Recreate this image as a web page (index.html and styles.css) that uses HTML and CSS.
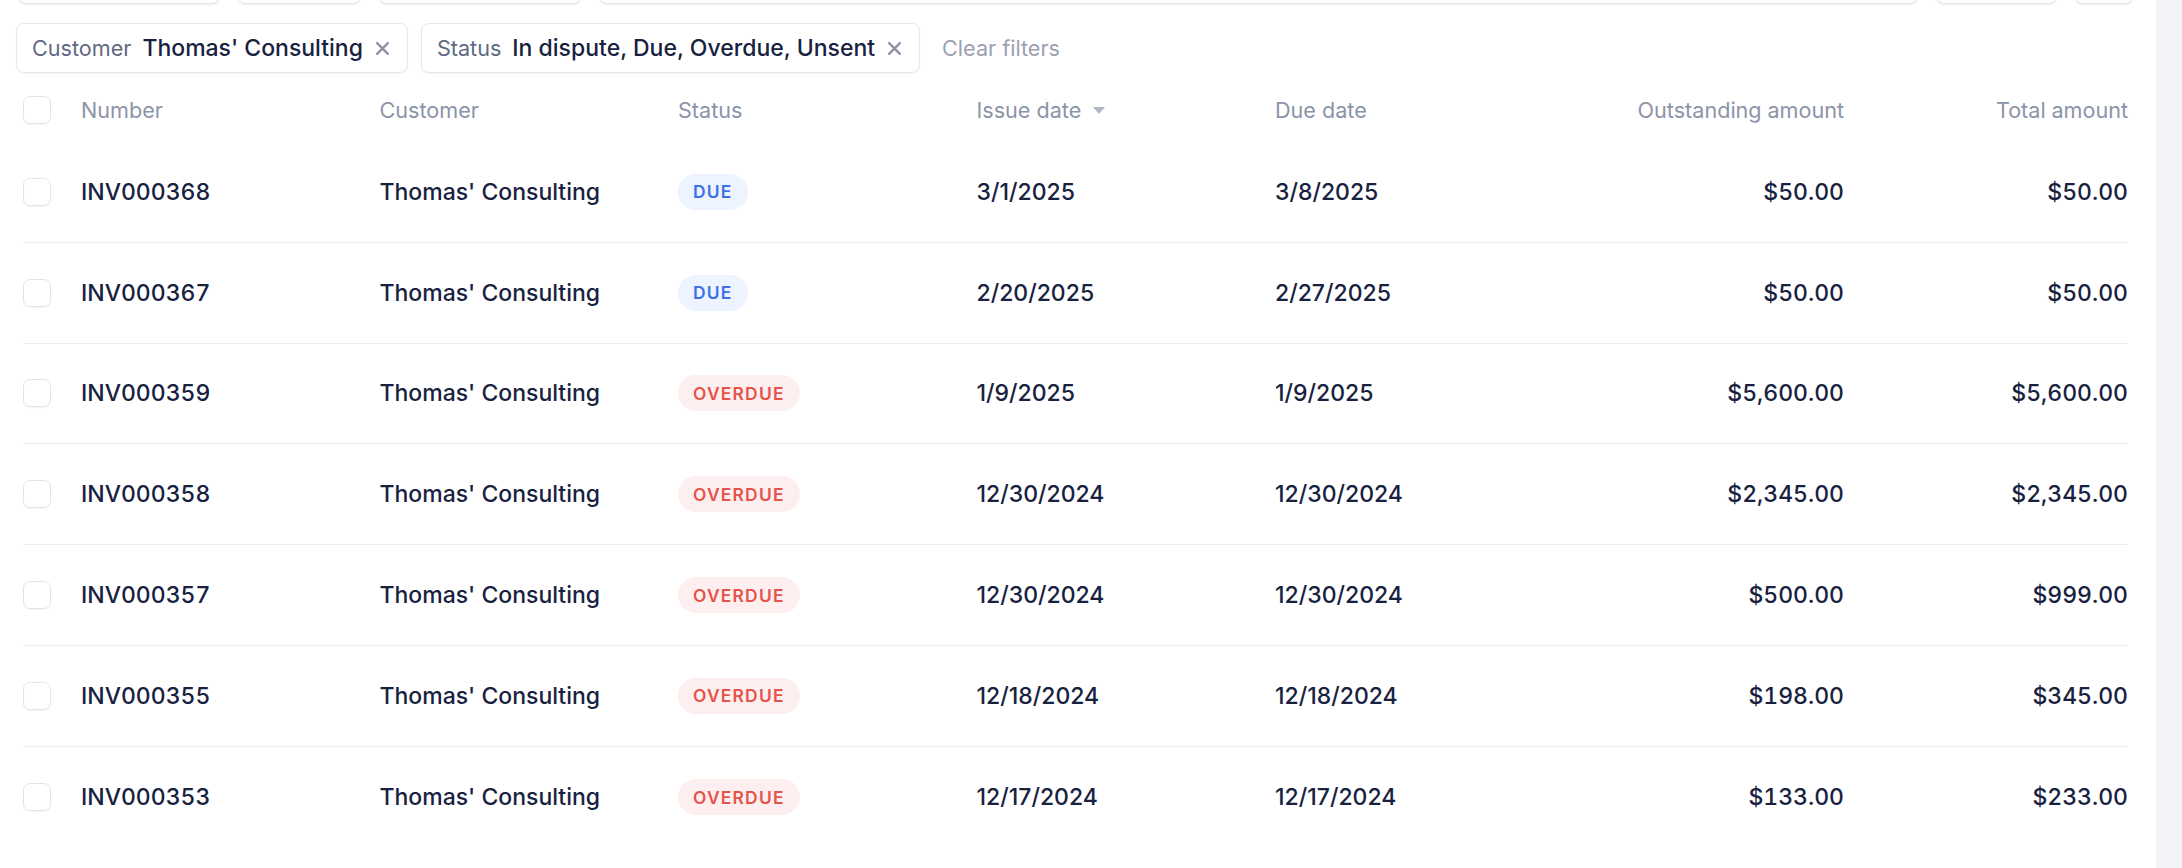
FILE: index.html
```html
<!DOCTYPE html>
<html lang="en">
<head>
  <meta charset="UTF-8">
  <title>Invoices</title>
  <link rel="stylesheet" href="styles.css">
</head>
<body>
  <div class="page">
    <main class="main">
      <!-- toolbar scrolled out of view, only bottom edges left -->
      <div class="toolbar">
        <span class="tool-btn w-search"></span>
        <span class="tool-btn w-small"></span>
        <span class="tool-btn w-mid"></span>
        <span class="tool-btn w-grow"></span>
        <span class="tool-btn w-action"></span>
        <span class="tool-btn w-icon"></span>
      </div>

      <div class="filters">
        <div class="chip">
          <span class="chip-label">Customer</span>
          <span class="chip-value">Thomas' Consulting</span>
          <svg class="chip-x" viewBox="0 0 16 16" width="17" height="17"><path d="M3 3l10 10M13 3L3 13" stroke="currentColor" stroke-width="2.2" stroke-linecap="round"/></svg>
        </div>
        <div class="chip">
          <span class="chip-label">Status</span>
          <span class="chip-value">In dispute, Due, Overdue, Unsent</span>
          <svg class="chip-x" viewBox="0 0 16 16" width="17" height="17"><path d="M3 3l10 10M13 3L3 13" stroke="currentColor" stroke-width="2.2" stroke-linecap="round"/></svg>
        </div>
        <span class="clear-filters">Clear filters</span>
      </div>

      <div class="table">
        <div class="row head">
          <div class="cell"><span class="checkbox"></span></div>
          <div class="cell">Number</div>
          <div class="cell">Customer</div>
          <div class="cell">Status</div>
          <div class="cell">Issue date <span class="sort-arrow"></span></div>
          <div class="cell">Due date</div>
          <div class="cell num">Outstanding amount</div>
          <div class="cell num">Total amount</div>
        </div>

        <div class="row">
          <div class="cell"><span class="checkbox"></span></div>
          <div class="cell code">INV000368</div>
          <div class="cell">Thomas' Consulting</div>
          <div class="cell"><span class="badge due">Due</span></div>
          <div class="cell">3/1/2025</div>
          <div class="cell">3/8/2025</div>
          <div class="cell num">$50.00</div>
          <div class="cell num">$50.00</div>
        </div>
        <div class="row">
          <div class="cell"><span class="checkbox"></span></div>
          <div class="cell code">INV000367</div>
          <div class="cell">Thomas' Consulting</div>
          <div class="cell"><span class="badge due">Due</span></div>
          <div class="cell">2/20/2025</div>
          <div class="cell">2/27/2025</div>
          <div class="cell num">$50.00</div>
          <div class="cell num">$50.00</div>
        </div>
        <div class="row">
          <div class="cell"><span class="checkbox"></span></div>
          <div class="cell code">INV000359</div>
          <div class="cell">Thomas' Consulting</div>
          <div class="cell"><span class="badge overdue">Overdue</span></div>
          <div class="cell">1/9/2025</div>
          <div class="cell">1/9/2025</div>
          <div class="cell num">$5,600.00</div>
          <div class="cell num">$5,600.00</div>
        </div>
        <div class="row">
          <div class="cell"><span class="checkbox"></span></div>
          <div class="cell code">INV000358</div>
          <div class="cell">Thomas' Consulting</div>
          <div class="cell"><span class="badge overdue">Overdue</span></div>
          <div class="cell">12/30/2024</div>
          <div class="cell">12/30/2024</div>
          <div class="cell num">$2,345.00</div>
          <div class="cell num">$2,345.00</div>
        </div>
        <div class="row">
          <div class="cell"><span class="checkbox"></span></div>
          <div class="cell code">INV000357</div>
          <div class="cell">Thomas' Consulting</div>
          <div class="cell"><span class="badge overdue">Overdue</span></div>
          <div class="cell">12/30/2024</div>
          <div class="cell">12/30/2024</div>
          <div class="cell num">$500.00</div>
          <div class="cell num">$999.00</div>
        </div>
        <div class="row">
          <div class="cell"><span class="checkbox"></span></div>
          <div class="cell code">INV000355</div>
          <div class="cell">Thomas' Consulting</div>
          <div class="cell"><span class="badge overdue">Overdue</span></div>
          <div class="cell">12/18/2024</div>
          <div class="cell">12/18/2024</div>
          <div class="cell num">$198.00</div>
          <div class="cell num">$345.00</div>
        </div>
        <div class="row">
          <div class="cell"><span class="checkbox"></span></div>
          <div class="cell code">INV000353</div>
          <div class="cell">Thomas' Consulting</div>
          <div class="cell"><span class="badge overdue">Overdue</span></div>
          <div class="cell">12/17/2024</div>
          <div class="cell">12/17/2024</div>
          <div class="cell num">$133.00</div>
          <div class="cell num">$233.00</div>
        </div>
      </div>
    </main>
    <aside class="rail"></aside>
  </div>
</body>
</html>
```

FILE: styles.css
```css
/* Base */
body {
  margin: 0;
  font-family: Inter, "Noto Sans", Arial, sans-serif;
  font-size: 23px;
  color: #18223f;
  background: #ffffff;
  overflow: hidden;
}
.page {
  display: flex;
  height: 868px;
}
.main {
  flex: 1;
  min-width: 0;
}
.rail {
  width: 26px;
  background: #f2f3f7;
}

/* Toolbar (scrolled off the top) */
.toolbar {
  display: flex;
  gap: 18px;
  padding: 0 23px 0 18px;
  margin-top: -40px;
}
.tool-btn {
  display: block;
  height: 42px;
  border: 1px solid #e4e6eb;
  border-radius: 8px;
  box-shadow: 0 1px 2px rgba(20, 30, 60, 0.08);
  background: #fff;
}
.w-search { width: 200px; }
.w-small { width: 121px; }
.w-mid { width: 200px; }
.w-grow { flex: 1; }
.w-action { width: 119px; }
.w-icon { width: 56px; }

/* Filter chips */
.filters {
  display: flex;
  align-items: center;
  gap: 13px;
  padding: 19px 16px 0;
}
.chip {
  display: flex;
  align-items: center;
  height: 50px;
  box-sizing: border-box;
  padding: 0 16px 0 15px;
  border: 1.4px solid #e5e7ec;
  border-radius: 8px;
  box-shadow: 0 1px 2px rgba(20, 30, 60, 0.04);
}
.chip-label {
  color: #5f6982;
  font-size: 21.6px;
  margin-right: 11px;
}
.chip-value {
  color: #18223f;
  font-weight: 500;
}
.chip-x {
  color: #8a91a3;
  margin-left: 11px;
}
.clear-filters {
  color: #9aa1b2;
  font-size: 21.6px;
  margin-left: 9px;
}

/* Table */
.table {
  margin: 5px 28px 0 23px;
}
.row {
  display: grid;
  grid-template-columns: 58px repeat(5, 298.5px) 1fr 284px;
  align-items: center;
  height: 100.8px;
  box-sizing: border-box;
  border-bottom: 1px solid #eceef2;
  font-weight: 500;
}
.row:last-child {
  border-bottom: none;
}
.row.head {
  height: 64px;
  border-bottom: none;
  color: #8c94a8;
  font-size: 21.6px;
  font-weight: 400;
}
.cell {
  display: flex;
  align-items: center;
  white-space: nowrap;
}
.cell.code,
.cell.num {
  font-variant-numeric: tabular-nums;
}
.cell.num {
  justify-content: flex-end;
}
.checkbox {
  display: block;
  width: 28px;
  height: 28px;
  box-sizing: border-box;
  border: 1.4px solid #e2e4ea;
  border-radius: 7px;
  box-shadow: 0 1px 1px rgba(20, 30, 60, 0.04);
}
.sort-arrow {
  display: inline-block;
  margin-left: 12px;
  width: 0;
  height: 0;
  border-left: 6px solid transparent;
  border-right: 6px solid transparent;
  border-top: 7px solid #b0b6c3;
}

/* Status badges */
.badge {
  display: inline-flex;
  align-items: center;
  height: 36px;
  padding: 0 15px;
  border-radius: 18px;
  font-size: 17.4px;
  font-weight: 600;
  letter-spacing: 0.07em;
  text-transform: uppercase;
}
.badge.due {
  background: #edf3ff;
  color: #3b72e6;
}
.badge.overdue {
  background: #fdefef;
  color: #e5534b;
}
```
